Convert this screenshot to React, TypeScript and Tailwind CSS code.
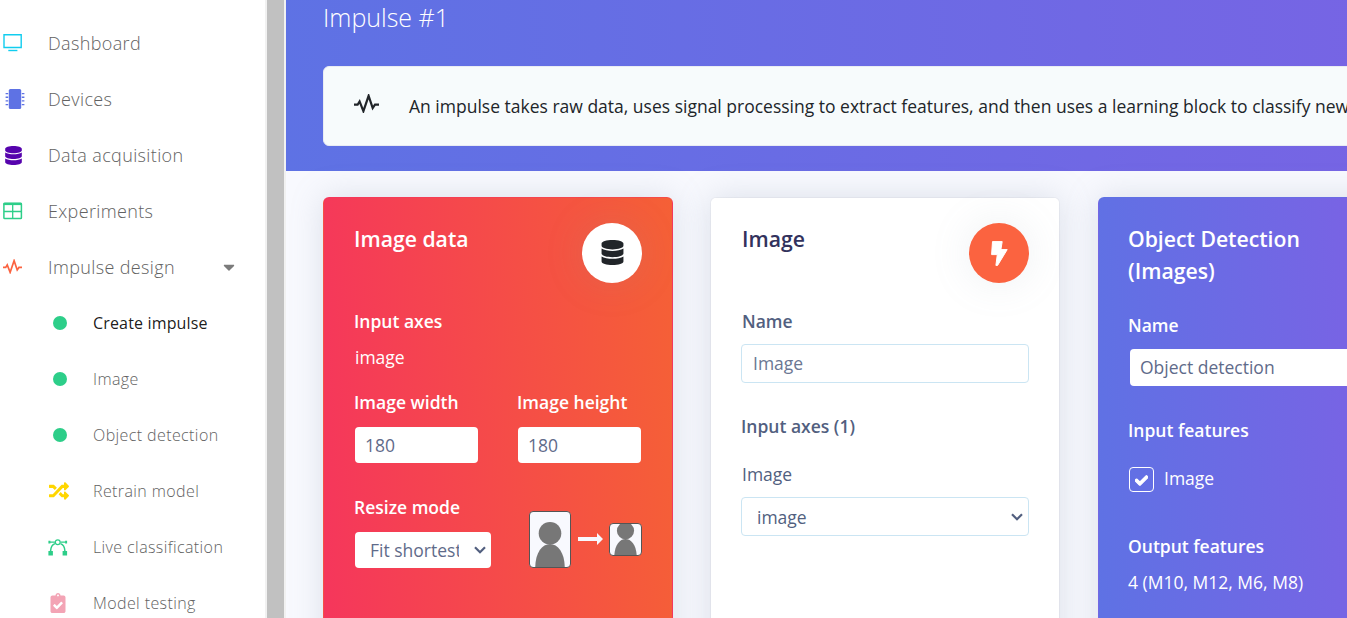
import type { ReactNode } from "react";
import { FaCaretDown, FaCheck, FaClipboardCheck, FaDatabase, FaRandom } from "react-icons/fa";

const Monitor = () => (
  <svg width="20" height="18" viewBox="0 0 20 18" fill="none" stroke="currentColor">
    <path d="M1 .8H18.2V13.5H1Z" strokeWidth="1.4" />
    <path d="M5.3 16.5H14.4" strokeWidth="1.4" />
  </svg>
);

const Chip = () => (
  <svg width="20" height="20" viewBox="0 0 20 20" fill="currentColor">
    <rect x="3.8" y="0" width="12.4" height="20" rx="1.6" />
    <path d="M.6 4H3.2V5.2H.6ZM.6 7.6H3.2V8.9H.6ZM.6 11.3H3.2V12.6H.6ZM.6 15H3.2V16.2H.6ZM16.8 4H19.4V5.2H16.8ZM16.8 7.6H19.4V8.9H16.8ZM16.8 11.3H19.4V12.6H16.8ZM16.8 15H19.4V16.2H16.8Z" />
  </svg>
);

const TableIcon = () => (
  <svg width="20" height="18" viewBox="0 0 20 18" fill="none" stroke="currentColor">
    <rect x=".9" y="1.2" width="17.5" height="15.4" rx=".8" strokeWidth="1.5" />
    <path d="M.5 2H18.8" strokeWidth="2.2" />
    <path d="M9.7 2V16.5M1 9.5H18.4" strokeWidth="1.3" />
  </svg>
);

const Bezier = () => (
  <svg width="20" height="17" viewBox="0 0 20 17" fill="none" stroke="currentColor">
    <path d="M2 3.2H7M12.5 3.2H17.5" strokeWidth="1.2" />
    <path d="M7 4.6C4.2 5.6 2.8 8 2.6 12M12.5 4.6C15.3 5.6 16.7 8 16.9 12" strokeWidth="1.5" />
    <circle cx="9.75" cy="3.2" r="2.4" strokeWidth="1.2" />
    <path d="M.4 12H4.9V16.4H.4ZM14.6 12H19.1V16.4H14.6ZM.4 1.8H2.4V4.4H.4ZM17.1 1.8H19.1V4.4H17.1Z" fill="currentColor" stroke="none" />
  </svg>
);

const Bolt = () => (
  <svg width="17" height="25" viewBox="0 0 17 25" fill="currentColor" stroke="currentColor" strokeWidth="1" strokeLinejoin="round">
    <path d="M1.5 .6H11.2L9.9 8.6H16.2L6.6 24.4H4.9L6.3 13.6H.6Z" />
  </svg>
);

const Pulse = ({ className }: { className: string }) => (
  <svg className={className} viewBox="0 0 25 19" fill="none" stroke="currentColor" strokeWidth="2.2">
    <path d="M0 10.7H3.6L5.6 7.4L9.4 17.2L14.6 1.8L18.7 14.1L21 10.7H25" />
  </svg>
);

const Dot = () => <span className="block size-3.5 rounded-full bg-[#2dce89]" />;

function NavItem({ icon, label, caret }: { icon: ReactNode; label: string; caret?: boolean }) {
  return (
    <li className="flex h-14 items-center pl-[3px]">
      <span className="flex w-[45px] shrink-0">{icon}</span>
      <span className="text-[18px] font-light tracking-[0.02em] text-[#626262]">{label}</span>
      {caret && <FaCaretDown className="mr-[27px] ml-auto size-[18px] text-[#7b7b7b]" />}
    </li>
  );
}

function SubItem({ icon, label, active }: { icon: ReactNode; label: string; active?: boolean }) {
  return (
    <li className="flex h-14 items-center pl-12">
      <span className="flex w-[45px] shrink-0">{icon}</span>
      <span className={active ? "text-[16px] tracking-[0.01em] text-black/90" : "text-[16px] font-light tracking-[0.025em] text-[#626262]"}>{label}</span>
    </li>
  );
}

const Chevron = () => (
  <svg className="h-2 w-3 shrink-0" viewBox="0 0 12 8" fill="none" stroke="#525f7f" strokeWidth="2.2">
    <path d="M1 1.2L6 6.2L11 1.2" />
  </svg>
);

function Badge({ children, className }: { children: ReactNode; className: string }) {
  return (
    <span className={`flex size-[60px] shrink-0 items-center justify-center rounded-full shadow-[0_0_40px_rgba(136,152,170,0.15)] ${className}`}>
      {children}
    </span>
  );
}

const Field = ({ value }: { value: string }) => (
  <div className="ml-px flex h-9 w-[123px] items-center rounded bg-white pl-2.5 text-[17.5px] text-[#5f6b8a]">{value}</div>
);

const Person = ({ className, box }: { className: string; box: string }) => (
  <svg className={className} viewBox={box}>
    <circle cx="21" cy="22.3" r="11.3" fill="#777" />
    <path d="M6.2 57C6.2 42 13 33 21 33S35.8 42 35.8 57Z" fill="#777" />
  </svg>
);

export default function App() {
  return (
    <div className="flex h-[618px] w-full overflow-hidden bg-white font-['Open_Sans',sans-serif]">
      <nav className="w-[265px] shrink-0 overflow-hidden pt-[15px]">
        <ul>
          <NavItem icon={<span className="text-[#11cdef]"><Monitor /></span>} label="Dashboard" />
          <NavItem icon={<span className="pl-[1.5px] text-[#5e72e4]"><Chip /></span>} label="Devices" />
          <NavItem icon={<FaDatabase className="ml-px size-[19px] text-[#5603ad]" />} label="Data acquisition" />
          <NavItem icon={<span className="text-[#2dce89]"><TableIcon /></span>} label="Experiments" />
          <NavItem icon={<Pulse className="-mt-px h-[15px] w-[19px] text-[#fb6340]" />} label="Impulse design" caret />
          <SubItem icon={<span className="pl-[5px]"><Dot /></span>} label="Create impulse" active />
          <SubItem icon={<span className="pl-[5px]"><Dot /></span>} label="Image" />
          <SubItem icon={<span className="pl-[5px]"><Dot /></span>} label="Object detection" />
          <SubItem icon={<FaRandom className="ml-px size-5 text-[#ffd600]" />} label="Retrain model" />
          <SubItem icon={<span className="text-[#2dce89]"><Bezier /></span>} label="Live classification" />
          <SubItem icon={<FaClipboardCheck className="-mt-px size-5 text-[#f3a4b5]" />} label="Model testing" />
        </ul>
      </nav>
      <div className="w-[21px] shrink-0 border-r-2 border-l-2 border-[#f1f1f1] bg-[#c1c1c1]" />

      <main className="min-w-0 flex-1 overflow-hidden bg-[#f8f9fe]">
        <header className="h-[171px] w-[1600px] bg-[linear-gradient(87deg,#5e72e4_0,#825ee4_100%)] pl-[37px]">
          <h1 className="h-[66px] pt-px text-[25px] leading-[33px] font-light text-white">Impulse #1</h1>
          <div className="flex h-20 items-center rounded-md border border-[#e9ecf3] bg-[#f7fbfc] pl-[30px] text-[#212529]">
            <Pulse className="-mt-[5px] h-[19px] w-[25px]" />
            <p className="pl-[30px] text-[17.5px] whitespace-nowrap">
              An impulse takes raw data, uses signal processing to extract features, and then uses a learning block to classify new
            </p>
          </div>
        </header>

        <div className="flex w-[1400px] gap-[37px] pt-[26px] pl-[37px]">
          <section className="h-[480px] w-[350px] shrink-0 rounded-md border border-[#f5365c]/40 bg-[linear-gradient(87deg,#f5365c_0,#f56036_100%)] px-[30px] pt-[25px] text-white shadow-[0_0_32px_rgba(136,152,170,0.25)]">
            <div className="flex h-[84px] justify-between">
              <h2 className="text-[21.2px] leading-8 font-semibold">Image data</h2>
              <Badge className="bg-white text-[#212529]"><FaDatabase className="-mt-px size-[25px]" /></Badge>
            </div>
            <h3 className="text-[17.5px] leading-7 font-semibold">Input axes</h3>
            <p className="mt-2 pl-px text-[17.5px] leading-7">image</p>
            <div className="mt-[17px] flex gap-[39px]">
              <div>
                <h3 className="mb-[11px] text-[17.5px] leading-7 font-semibold">Image width</h3>
                <Field value="180" />
              </div>
              <div>
                <h3 className="mb-[11px] text-[17.5px] leading-7 font-semibold">Image height</h3>
                <Field value="180" />
              </div>
            </div>
            <div className="mt-[30px] flex">
              <div className="w-[175px] shrink-0">
                <h3 className="mb-[11px] text-[17.5px] leading-7 font-semibold">Resize mode</h3>
                <div className="ml-px flex h-9 w-[136px] items-center rounded bg-white pl-[15px] text-[17.5px] text-[#5f6b8a]">
                  <span className="mr-[15px] w-[89px] shrink-0 overflow-hidden whitespace-nowrap">Fit shortest axis</span>
                  <Chevron />
                </div>
              </div>
              <div className="mt-[18px] flex h-[57px] items-center">
                <Person className="h-[57px] w-[42px] shrink-0 rounded-sm border border-[#555] bg-[#f8f9fe]" box="1 1 40 55" />
                <svg className="mx-[6.5px] -mt-px h-3 w-[25px] shrink-0" viewBox="0 0 25 12" fill="#f8f9fe">
                  <path d="M0 4H19V0L25 6L19 12V8H0Z" />
                </svg>
                <Person className="size-[33px] shrink-0 rounded-sm border border-[#555] bg-[#f8f9fe]" box="0.6 13.4 40.8 40.8" />
              </div>
            </div>
          </section>

          <section className="h-[480px] w-[350px] shrink-0 rounded-md border border-black/[0.03] bg-white bg-clip-padding px-[30px] pt-[25px] text-[#525f7f] shadow-[0_0_32px_rgba(136,152,170,0.25)]">
            <div className="flex h-[84px] justify-between">
              <h2 className="pl-px text-[21.2px] leading-8 font-semibold text-[#32325d]">Image</h2>
              <Badge className="bg-[#fb6340] text-white"><Bolt /></Badge>
            </div>
            <h3 className="pl-px text-[17.5px] leading-7 font-semibold">Name</h3>
            <div className="mt-[9px] flex h-[39px] items-center rounded border border-[#cbe5f3] pl-[11px] text-[17.5px] text-[#6b7793]">Image</div>
            <h3 className="mt-[29px] text-[17.5px] leading-7 font-semibold">Input axes (1)</h3>
            <p className="mt-5 pl-px text-[17.5px] leading-7">Image</p>
            <div className="mt-[9px] flex h-[39px] items-center justify-between rounded border border-[#cbe5f3] pr-[5px] pl-[15px] text-[17.5px]">
              <span className="pt-px">image</span>
              <Chevron />
            </div>
          </section>

          <section className="ml-px h-[480px] w-[350px] shrink-0 rounded-md border border-[#5e72e4]/40 bg-[linear-gradient(87deg,#5e72e4_0,#825ee4_100%)] px-[30px] pt-[25px] text-white shadow-[0_0_32px_rgba(136,152,170,0.25)]">
            <h2 className="-ml-px h-[88px] w-[200px] text-[21.2px] leading-8 font-semibold">Object Detection (Images)</h2>
            <h3 className="-ml-px text-[17.5px] leading-7 font-semibold">Name</h3>
            <div className="mt-[10px] ml-px flex h-[37px] items-center rounded bg-white pl-2.5 text-[17.5px] text-[#5f6b8a]">Object detection</div>
            <h3 className="mt-[30px] -ml-px text-[17.5px] leading-7 font-semibold">Input features</h3>
            <div className="mt-[23px] flex h-[25px] items-center gap-2.5">
              <span className="flex size-[25px] items-center justify-center rounded border border-white">
                <FaCheck className="mt-px size-[13px]" stroke="currentColor" strokeWidth="40" />
              </span>
              <span className="-mt-0.5 text-[17.5px]">Image</span>
            </div>
            <h3 className="mt-10 -ml-px text-[17.5px] leading-7 font-semibold">Output features</h3>
            <p className="mt-2 -ml-px text-[17.5px] leading-7">4 (M10, M12, M6, M8)</p>
          </section>
        </div>
      </main>
    </div>
  );
}
